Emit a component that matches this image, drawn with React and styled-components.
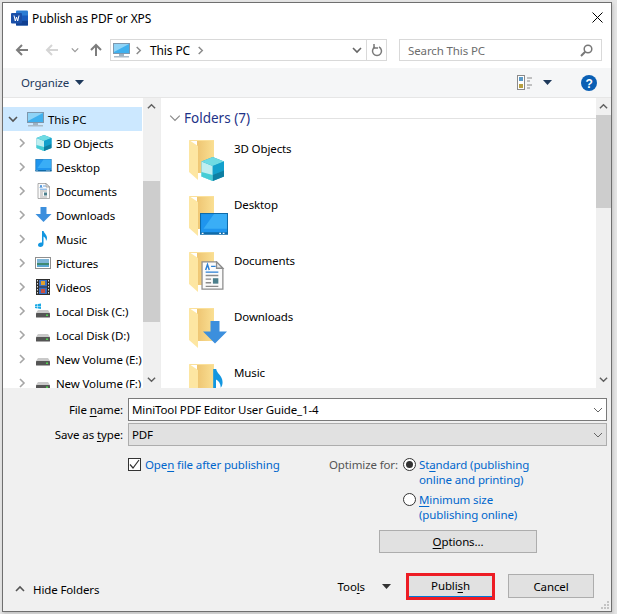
import React from 'react'
import styled, { createGlobalStyle } from 'styled-components'

const Global = createGlobalStyle`
  html, body {
    margin: 0;
    background: #e4e4e4;
  }
  body {
    font-family: "Noto Sans", "Open Sans", sans-serif;
    font-size: 11.5px;
    letter-spacing: -0.12px;
    color: #000;
  }
`

const Page = styled.div`
  width: 617px;
  height: 614px;
  padding: 2px 5px 2px 2px;
  box-sizing: border-box;
`

const Win = styled.div`
  width: 610px;
  height: 610px;
  box-sizing: border-box;
  border: 1px solid #6f6f6f;
  background: #f0f0f0;
  display: flex;
  flex-direction: column;
  box-shadow: 1px 2px 3px rgba(0, 0, 0, 0.15);
`

const TitleBar = styled.div`
  height: 29px;
  background: #fff;
  display: flex;
  align-items: center;
  padding: 0 0 0 8px;
  gap: 4px;
  flex: none;
`

const Title = styled.span`
  flex: 1;
  font-size: 12px;
  padding-top: 1px;
`

const CloseBtn = styled.div`
  width: 28px;
  height: 29px;
  display: flex;
  align-items: center;
  justify-content: center;
`

const NavRow = styled.div`
  height: 36px;
  background: #fff;
  display: flex;
  align-items: center;
  padding: 0 0 0 5px;
  box-sizing: border-box;
  flex: none;
`

const NavBtns = styled.div`
  width: 102px;
  display: flex;
  align-items: center;
  flex: none;
`

const NavSlot = styled.div`
  width: ${p => p.$w}px;
  display: flex;
  justify-content: center;
`

const AddressBox = styled.div`
  width: 277px;
  height: 22px;
  box-sizing: border-box;
  border: 1px solid #d9d9d9;
  display: flex;
  align-items: center;
  background: #fff;
  flex: none;
`

const AddressIcon = styled.div`
  display: flex;
  margin: 0 4px 0 2px;
`

const Crumb = styled.span`
  margin: 0 6px 0 7px;
  font-size: 12px;
`

const AddressEnd = styled.div`
  margin-left: auto;
  display: flex;
  align-items: center;
  height: 100%;
`

const RefreshSlot = styled.div`
  width: 19px;
  height: 100%;
  border-left: 1px solid #d9d9d9;
  margin-left: 4px;
  display: flex;
  align-items: center;
  justify-content: center;
`

const SearchBox = styled.div`
  width: 203px;
  height: 22px;
  box-sizing: border-box;
  margin-left: 12px;
  border: 1px solid #d9d9d9;
  display: flex;
  align-items: center;
  justify-content: space-between;
  padding: 0 8px;
  color: #6d6d6d;
  flex: none;
`

const Toolbar = styled.div`
  height: 30px;
  background: #f5f6f7;
  border-bottom: 1px solid #e6e6e6;
  box-sizing: border-box;
  display: flex;
  align-items: center;
  padding: 0 14px 0 18px;
  flex: none;
`

const Organize = styled.span`
  color: #1e395b;
  margin-right: 6px;
`

const ToolbarEnd = styled.div`
  margin-left: auto;
  display: flex;
  align-items: center;
`

const ViewIcon = styled.svg`
  margin-right: 10px;
`

const HelpIcon = styled.svg`
  margin-left: 29px;
`

const Main = styled.div`
  height: 290px;
  display: flex;
  background: #fff;
  flex: none;
  overflow: hidden;
`

const Sidebar = styled.div`
  width: 140px;
  padding-top: 9px;
  overflow: hidden;
  flex: none;
`

const TreeRow = styled.div`
  height: 24px;
  margin-right: 1px;
  display: flex;
  align-items: center;
  background: ${p => (p.$selected ? '#cce8ff' : 'transparent')};
  white-space: nowrap;
`

const Twisty = styled.div`
  width: ${p => p.$w}px;
  box-sizing: border-box;
  padding-left: ${p => p.$at - 5}px;
  display: flex;
  flex: none;
`

const TreeIcon = styled.div`
  width: 20px;
  height: 20px;
  display: flex;
  align-items: center;
  justify-content: center;
  margin-right: 3px;
  flex: none;
`

const Scrollbar = styled.div`
  width: ${p => p.$w}px;
  background: #f0f0f0;
  display: flex;
  flex-direction: column;
  align-items: center;
  flex: none;
`

const ScrollArrow = styled.div`
  height: 17px;
  display: flex;
  align-items: center;
  justify-content: center;
  flex: none;
`

const ScrollTrack = styled.div`
  flex: 1;
  width: 100%;
  padding-top: ${p => p.$top}px;
  padding-bottom: ${p => p.$bottom}px;
  box-sizing: border-box;
  display: flex;
`

const ScrollThumb = styled.div`
  flex: 1;
  background: #cdcdcd;
`

const Content = styled.div`
  flex: 1;
  border-left: 1px solid #eee;
  overflow: hidden;
  padding: 11px 0 0 8px;
  min-width: 0;
`

const GroupHeader = styled.div`
  display: flex;
  align-items: center;
  height: 18px;
  gap: 3px;
`

const GroupTitle = styled.span`
  color: #1e3287;
  font-size: 13.5px;
  letter-spacing: 0;
`

const GroupLine = styled.div`
  flex: 1;
  height: 1px;
  background: #e2e2e2;
  margin-left: 4px;
`

const TileList = styled.div`
  margin-top: 13px;
  padding-left: 20px;
`

const Tile = styled.div`
  height: 56px;
  display: flex;
  align-items: flex-start;
`

const TileLabel = styled.span`
  margin-left: 5px;
  margin-top: 1px;
`

const Bottom = styled.div`
  flex: 1;
  position: relative;
  padding: 10px 4px 0 0;
  display: flex;
  flex-direction: column;
`

const FormGrid = styled.div`
  display: grid;
  grid-template-columns: 120px 1fr;
  column-gap: 5px;
  row-gap: 2px;
  align-items: center;
`

const FieldLabel = styled.label`
  text-align: right;
`

const Field = styled.div`
  height: 23px;
  box-sizing: border-box;
  border: 1px solid ${p => (p.$dim ? '#adadad' : '#7a7a7a')};
  background: ${p => (p.$dim ? '#e1e1e1' : '#fff')};
  display: flex;
  align-items: center;
  justify-content: space-between;
  padding: 0 3px;
`

const Key = styled.span`
  text-decoration: underline;
  text-underline-offset: 2px;
`

const OptionsGrid = styled.div`
  display: grid;
  grid-template-columns: 201px 1fr;
  margin: 12px 0 0 125px;
`

const CheckRow = styled.div`
  display: flex;
  align-items: flex-start;
  gap: 4px;
`

const CheckBox = styled.div`
  width: 13px;
  height: 13px;
  box-sizing: border-box;
  border: 1px solid #333;
  background: #fff;
  display: flex;
  align-items: center;
  justify-content: center;
  flex: none;
`

const LinkText = styled.span`
  color: #0066cc;
  line-height: 15px;
  display: block;
  margin-top: -1px;
`

const OptimizePane = styled.div`
  display: flex;
  align-items: flex-start;
  gap: 6px;
`

const OptimizeLabel = styled.span`
  color: #555;
  line-height: 15px;
  margin-top: -1px;
  width: 68px;
  white-space: nowrap;
  flex: none;
`

const RadioGroup = styled.div`
  display: flex;
  flex-direction: column;
  gap: 6px;
`

const RadioRow = styled.div`
  display: flex;
  align-items: flex-start;
  gap: 3px;
`

const Radio = styled.div`
  width: 13px;
  height: 13px;
  box-sizing: border-box;
  border: 1px solid #333;
  border-radius: 50%;
  background: #fff;
  display: flex;
  align-items: center;
  justify-content: center;
  flex: none;
  &::after {
    content: '';
    display: ${p => (p.$on ? 'block' : 'none')};
    width: 7px;
    height: 7px;
    border-radius: 50%;
    background: #333;
  }
`

const Button = styled.div`
  box-sizing: border-box;
  width: ${p => p.$w}px;
  height: ${p => p.$h}px;
  background: #e1e1e1;
  border: 1px solid #adadad;
  display: flex;
  align-items: center;
  justify-content: center;
  flex: none;
`

const PublishButton = styled(Button)`
  border: none;
  border-bottom: 1px solid #0078d7;
`

const OptionsRow = styled.div`
  display: flex;
  justify-content: flex-end;
  padding-right: 70px;
  margin-top: 8px;
`

const Footer = styled.div`
  margin-top: auto;
  padding: 0 13px 10px 12px;
  display: flex;
  align-items: center;
  height: 30px;
`

const HideFolders = styled.div`
  display: flex;
  align-items: center;
  gap: 8px;
  margin-top: 6px;
`

const Tools = styled.div`
  margin-left: auto;
  display: flex;
  align-items: center;
  gap: 17px;
  margin-right: 15px;
`

const Highlight = styled.div`
  border: 3px solid #ed1c24;
  display: flex;
  margin-right: 13px;
`

const Grip = styled.svg`
  position: absolute;
  right: 1px;
  bottom: 1px;
`

const FolderArt = styled.svg`
  flex: none;
  display: block;
`

/* icons */
const Chevron = ({ dir = 'right', color = '#a6a6a6', size = 10, width = 1.6 }) => {
  const d = {
    right: 'M3 1l4 4-4 4',
    down: 'M1 3l4 4 4-4',
    up: 'M1 7l4-4 4 4',
  }[dir]
  return (
    <svg width={size} height={size} viewBox="0 0 10 10">
      <path d={d} fill="none" stroke={color} strokeWidth={width} />
    </svg>
  )
}

const Caret = ({ color = '#1e395b' }) => (
  <svg width="9" height="5" viewBox="0 0 9 5">
    <path d="M0 0h9L4.500 5z" fill={color} />
  </svg>
)

const ArrowLeft = ({ color }) => (
  <svg width="14" height="14" viewBox="0 0 14 14">
    <path d="M13 7H2M7 2L2 7l5 5" fill="none" stroke={color} strokeWidth="2" />
  </svg>
)

const ArrowUp = ({ color }) => (
  <svg width="14" height="14" viewBox="0 0 14 14">
    <path d="M7 13V2M2 7l5-5 5 5" fill="none" stroke={color} strokeWidth="2" />
  </svg>
)

const Monitor = () => (
  <svg width="17" height="15" viewBox="0 0 17 15">
    <rect x="0.500" y="0.500" width="16" height="10" fill="#3fb0ee" stroke="#7d97ad" />
    <path d="M1 1h15L1 9z" fill="#8ed3f6" />
    <rect x="6" y="11" width="5" height="2" fill="#9fb3c3" />
    <rect x="1" y="13" width="15" height="1.500" fill="#a9bac7" />
  </svg>
)

const Cube = () => (
  <>
    <path d="M8.500 0L16 3v10l-7.500 3L1 13V3z" fill="#22a6c8" />
    <path d="M1 3l7.500 3v10L1 13z" fill="#bfeef0" />
    <path d="M8.500 0L16 3 8.500 6 1 3z" fill="#6fdbe3" />
    <path d="M8.500 6L16 3v6l-7.500 3z" fill="#13a0cc" />
    <path d="M1 10l7.500 2v4L1 13z" fill="#45cdd6" />
    <path d="M16 9v4l-7.500 3v-4z" fill="#0e7fa3" />
  </>
)

const Screen = () => (
  <>
    <rect x="0.300" y="0.300" width="15.400" height="11.700" fill="#1f95ee" stroke="#0f6aa8" strokeWidth="0.600" />
    <path d="M8 .6h7.400v8.400H2z" fill="#3aaef6" />
    <rect x="0" y="11" width="16" height="1.300" fill="#0f6aa8" />
    <path d="M1 11.600h1M11 11.600h1M13 11.600h1" stroke="#fff" strokeWidth="0.700" />
  </>
)

const Doc = () => (
  <>
    <path d="M2.500 0.500h8l3.500 3.500v11.500H2.500z" fill="#fbfbfb" stroke="#8d8d8d" strokeWidth="0.700" />
    <path d="M10.500 0.500V4H14z" fill="#e6e6e6" stroke="#8d8d8d" strokeWidth="0.700" />
    <path d="M4.500 5l1-3 1 3" fill="none" stroke="#2a7fd4" strokeWidth="0.800" />
    <path d="M7.500 3h2.500M4.500 6.200h7" stroke="#2a7fd4" strokeWidth="0.700" />
    <path d="M4.500 8h7M4.500 10h3M4.500 12h3M4.500 14h7" stroke="#8a8a8a" strokeWidth="0.700" />
    <rect x="8.500" y="9.500" width="3" height="3" fill="#4c7f8c" />
  </>
)

const DownArrow = () => (
  <path d="M5 0h6v7h5l-8 8-8-8h5z" fill="#3c8fdd" />
)

const Note = () => (
  <path
    d="M6.500 0h1.600c.3 2.400 3.400 3.500 3.400 7 0 1.300-.4 2.300-1 3 .1-2-1-3.600-2.500-4.400V13c0 1.700-1.500 3-3.200 3C3.400 16 2.500 15.200 2.500 14c0-1.500 1.500-2.600 3-2.600.4 0 .7 0 1 .2z"
    fill="#1296e0"
  />
)

const Picture = () => (
  <svg width="16" height="12" viewBox="0 0 16 12">
    <rect x="0.500" y="0.500" width="15" height="11" fill="#fff" stroke="#8f8f8f" />
    <rect x="2" y="2" width="12" height="4" fill="#7fb6d8" />
    <rect x="2" y="6" width="12" height="2" fill="#3f8a72" />
    <rect x="2" y="8" width="12" height="2" fill="#5aa6d0" />
  </svg>
)

const Film = () => (
  <svg width="14" height="16" viewBox="0 0 14 16">
    <rect width="14" height="16" fill="#2e2e2e" />
    <rect x="3" y="1" width="8" height="6.500" fill="#3a6fc4" />
    <rect x="3" y="8.500" width="8" height="6.500" fill="#3a6fc4" />
    <rect x="5" y="2" width="4" height="4" fill="#e0a030" />
    <rect x="5" y="10" width="4" height="4" fill="#c85040" />
    <path d="M1.500 1v14M12.500 1v14" stroke="#ddd" strokeWidth="1" strokeDasharray="1.500 1.500" />
  </svg>
)

const Disk = ({ win }) => (
  <svg width="16" height="16" viewBox="0 0 16 16">
    {win && <path d="M0 1.500l2.500-.4V3H0zM3 1l3-.5V3H3zM0 3.500h2.500v2L0 5zM3 3.500h3V6l-3-.4z" fill="#19a9e5" />}
    <path d="M3 7h10l2 3H1z" fill="#c9c9c9" />
    <rect x="1" y="10" width="14" height="4.500" rx="0.500" fill="#555" />
    <rect x="11" y="11.500" width="2" height="1.500" fill="#4fd34f" />
  </svg>
)

const Glyph = ({ w = 17, h = 16, children }) => (
  <svg width={w} height={h} viewBox="0 0 16 16">
    {children}
  </svg>
)

const Folder = ({ children }) => (
  <FolderArt width="40" height="43" viewBox="0 0 40 43">
    <defs>
      <linearGradient id="back" x1="0" y1="0" x2="1" y2="0">
        <stop offset="0" stopColor="#eec572" />
        <stop offset="1" stopColor="#fadf93" />
      </linearGradient>
    </defs>
    <rect x="8" y="0" width="17" height="33" fill="url(#back)" />
    <path d="M0 0l9 6v34l-9-8z" fill="#fde6a2" />
    <path d="M0 0h25v1H1z" fill="#fbe09a" />
    {children}
  </FolderArt>
)

const Overlay = ({ x, y, s = 24, children }) => (
  <svg x={x} y={y} width={s} height={s} viewBox="0 0 16 16">
    {children}
  </svg>
)

const treeItems = [
  { label: '3D Objects', icon: <Glyph><Cube /></Glyph> },
  { label: 'Desktop', icon: <Glyph><Screen /></Glyph> },
  { label: 'Documents', icon: <Glyph><Doc /></Glyph> },
  { label: 'Downloads', icon: <Glyph><DownArrow /></Glyph> },
  { label: 'Music', icon: <Glyph><Note /></Glyph> },
  { label: 'Pictures', icon: <Picture /> },
  { label: 'Videos', icon: <Film /> },
  { label: 'Local Disk (C:)', icon: <Disk win /> },
  { label: 'Local Disk (D:)', icon: <Disk /> },
  { label: 'New Volume (E:)', icon: <Disk /> },
  { label: 'New Volume (F:)', icon: <Disk /> },
]

const tiles = [
  { label: '3D Objects', art: <Overlay x="11" y="17"><Cube /></Overlay> },
  { label: 'Desktop', art: <Overlay x="11" y="17" s="28"><Screen /></Overlay> },
  { label: 'Documents', art: <Overlay x="8.500" y="9" s="29"><Doc /></Overlay> },
  { label: 'Downloads', art: <Overlay x="14" y="13" s="24"><DownArrow /></Overlay> },
  { label: 'Music', art: <Overlay x="12" y="5" s="30"><Note /></Overlay> },
]

const App = () => (
  <Page>
    <Global />
    <Win>
      <TitleBar>
        <svg width="17" height="16" viewBox="0 0 17 16">
          <rect x="5" y="0.500" width="12" height="15" rx="1" fill="#2b7cd3" />
          <rect x="5" y="5.500" width="12" height="5" fill="#185abd" />
          <rect x="5" y="10.500" width="12" height="5" fill="#103f91" />
          <rect x="0" y="3" width="11" height="10.500" rx="1" fill="#1a4fa8" />
          <path d="M3 5.500l1.300 5.500 1.200-4 1.200 4L8 5.500" fill="none" stroke="#fff" strokeWidth="1" />
        </svg>
        <Title>Publish as PDF or XPS</Title>
        <CloseBtn>
          <svg width="11" height="11" viewBox="0 0 11 11">
            <path d="M.5.500l10 10M10.500.500l-10 10" stroke="#000" strokeWidth="1" />
          </svg>
        </CloseBtn>
      </TitleBar>
      <NavRow>
        <NavBtns>
          <NavSlot $w={28}><ArrowLeft color="#7d7d7d" /></NavSlot>
          <NavSlot $w={32}><ArrowLeft color="#d5d5d5" /></NavSlot>
          <NavSlot $w={14}><Chevron dir="down" color="#9a9a9a" size={8} /></NavSlot>
          <NavSlot $w={28}><ArrowUp color="#7d7d7d" /></NavSlot>
        </NavBtns>
        <AddressBox>
          <AddressIcon><Monitor /></AddressIcon>
          <Chevron color="#8a8a8a" size={9} />
          <Crumb>This PC</Crumb>
          <Chevron color="#8a8a8a" size={9} />
          <AddressEnd>
            <Chevron dir="down" color="#666" size={10} />
            <RefreshSlot>
              <svg width="12" height="13" viewBox="0 0 12 13">
                <path d="M4 3a4.500 4.500 0 1 0 4 0" fill="none" stroke="#7a7a7a" strokeWidth="1.500" />
                <path d="M3 0v4h4" fill="none" stroke="#7a7a7a" strokeWidth="1.500" />
              </svg>
            </RefreshSlot>
          </AddressEnd>
        </AddressBox>
        <SearchBox>
          Search This PC
          <svg width="13" height="13" viewBox="0 0 13 13">
            <circle cx="8" cy="5" r="3.800" fill="none" stroke="#777" strokeWidth="1.500" />
            <path d="M5.200 7.800L1 12" stroke="#777" strokeWidth="2" />
          </svg>
        </SearchBox>
      </NavRow>
      <Toolbar>
        <Organize>Organize</Organize>
        <Caret />
        <ToolbarEnd>
          <ViewIcon width="16" height="15" viewBox="0 0 16 15">
            <rect x="0.500" y="0.500" width="7" height="14" fill="#fff" stroke="#8a8a8a" />
            <rect x="2" y="2" width="4" height="4" fill="#5a9ac8" />
            <rect x="2" y="9" width="4" height="4" fill="#b8a040" />
            <path d="M10 3h5M10 6h3M10 10h5M10 13h3" stroke="#8a8a8a" strokeWidth="1" />
          </ViewIcon>
          <Caret />
          <HelpIcon width="16" height="16" viewBox="0 0 16 16">
            <circle cx="8" cy="8" r="8" fill="#0a5fb4" />
            <text x="8" y="12.500" textAnchor="middle" fill="#fff" fontSize="12" fontWeight="700" fontFamily="Liberation Sans">?</text>
          </HelpIcon>
        </ToolbarEnd>
      </Toolbar>
      <Main>
        <Sidebar>
          <TreeRow $selected>
            <Twisty $w={22} $at={10}><Chevron dir="down" color="#555" /></Twisty>
            <TreeIcon><Monitor /></TreeIcon>
            This PC
          </TreeRow>
          {treeItems.map(item => (
            <TreeRow key={item.label}>
              <Twisty $w={30} $at={19}><Chevron /></Twisty>
              <TreeIcon>{item.icon}</TreeIcon>
              {item.label}
            </TreeRow>
          ))}
        </Sidebar>
        <Scrollbar $w={17}>
          <ScrollArrow><Chevron dir="up" color="#606060" size={9} /></ScrollArrow>
          <ScrollTrack $top={66} $bottom={49}><ScrollThumb /></ScrollTrack>
          <ScrollArrow><Chevron dir="down" color="#606060" size={9} /></ScrollArrow>
        </Scrollbar>
        <Content>
          <GroupHeader>
            <Chevron dir="down" color="#8a8a8a" size={12} width={1} />
            <GroupTitle>Folders (7)</GroupTitle>
            <GroupLine />
          </GroupHeader>
          <TileList>
            {tiles.map(tile => (
              <Tile key={tile.label}>
                <Folder>{tile.art}</Folder>
                <TileLabel>{tile.label}</TileLabel>
              </Tile>
            ))}
          </TileList>
        </Content>
        <Scrollbar $w={15}>
          <ScrollArrow><Chevron dir="up" color="#606060" size={9} /></ScrollArrow>
          <ScrollTrack $top={0} $bottom={163}><ScrollThumb /></ScrollTrack>
          <ScrollArrow><Chevron dir="down" color="#606060" size={9} /></ScrollArrow>
        </Scrollbar>
      </Main>
      <Bottom>
        <FormGrid>
          <FieldLabel>File <Key>n</Key>ame:</FieldLabel>
          <Field>
            MiniTool PDF Editor User Guide_1-4
            <Chevron dir="down" color="#666" size={10} width={1} />
          </Field>
          <FieldLabel>Save as <Key>t</Key>ype:</FieldLabel>
          <Field $dim>
            PDF
            <Chevron dir="down" color="#666" size={10} width={1} />
          </Field>
        </FormGrid>
        <OptionsGrid>
          <CheckRow>
            <CheckBox>
              <svg width="11" height="11" viewBox="0 0 11 11">
                <path d="M1 5.500l3 3.500 6-8" fill="none" stroke="#333" strokeWidth="1.200" />
              </svg>
            </CheckBox>
            <LinkText>Ope<Key>n</Key> file after publishing</LinkText>
          </CheckRow>
          <OptimizePane>
            <OptimizeLabel>Optimize for:</OptimizeLabel>
            <RadioGroup>
              <RadioRow>
                <Radio $on />
                <LinkText>St<Key>a</Key>ndard (publishing<br />online and printing)</LinkText>
              </RadioRow>
              <RadioRow>
                <Radio />
                <LinkText><Key>M</Key>inimum size<br />(publishing online)</LinkText>
              </RadioRow>
            </RadioGroup>
          </OptimizePane>
        </OptionsGrid>
        <OptionsRow>
          <Button $w={158} $h={23}><span><Key>O</Key>ptions...</span></Button>
        </OptionsRow>
        <Footer>
          <HideFolders>
            <Chevron dir="up" color="#555" size={10} />
            Hide Folders
          </HideFolders>
          <Tools>
            <span>Too<Key>l</Key>s</span>
            <Caret color="#333" />
          </Tools>
          <Highlight>
            <PublishButton $w={83} $h={21}><span>Publi<Key>s</Key>h</span></PublishButton>
          </Highlight>
          <Button $w={86} $h={24}>Cancel</Button>
        </Footer>
        <Grip width="10" height="10" viewBox="0 0 10 10">
          <path d="M7 1h2v2H7zM4 4h2v2H4zM7 4h2v2H7zM1 7h2v2H1zM4 7h2v2H4zM7 7h2v2H7z" fill="#c4c4c4" />
        </Grip>
      </Bottom>
    </Win>
  </Page>
)

export default App
